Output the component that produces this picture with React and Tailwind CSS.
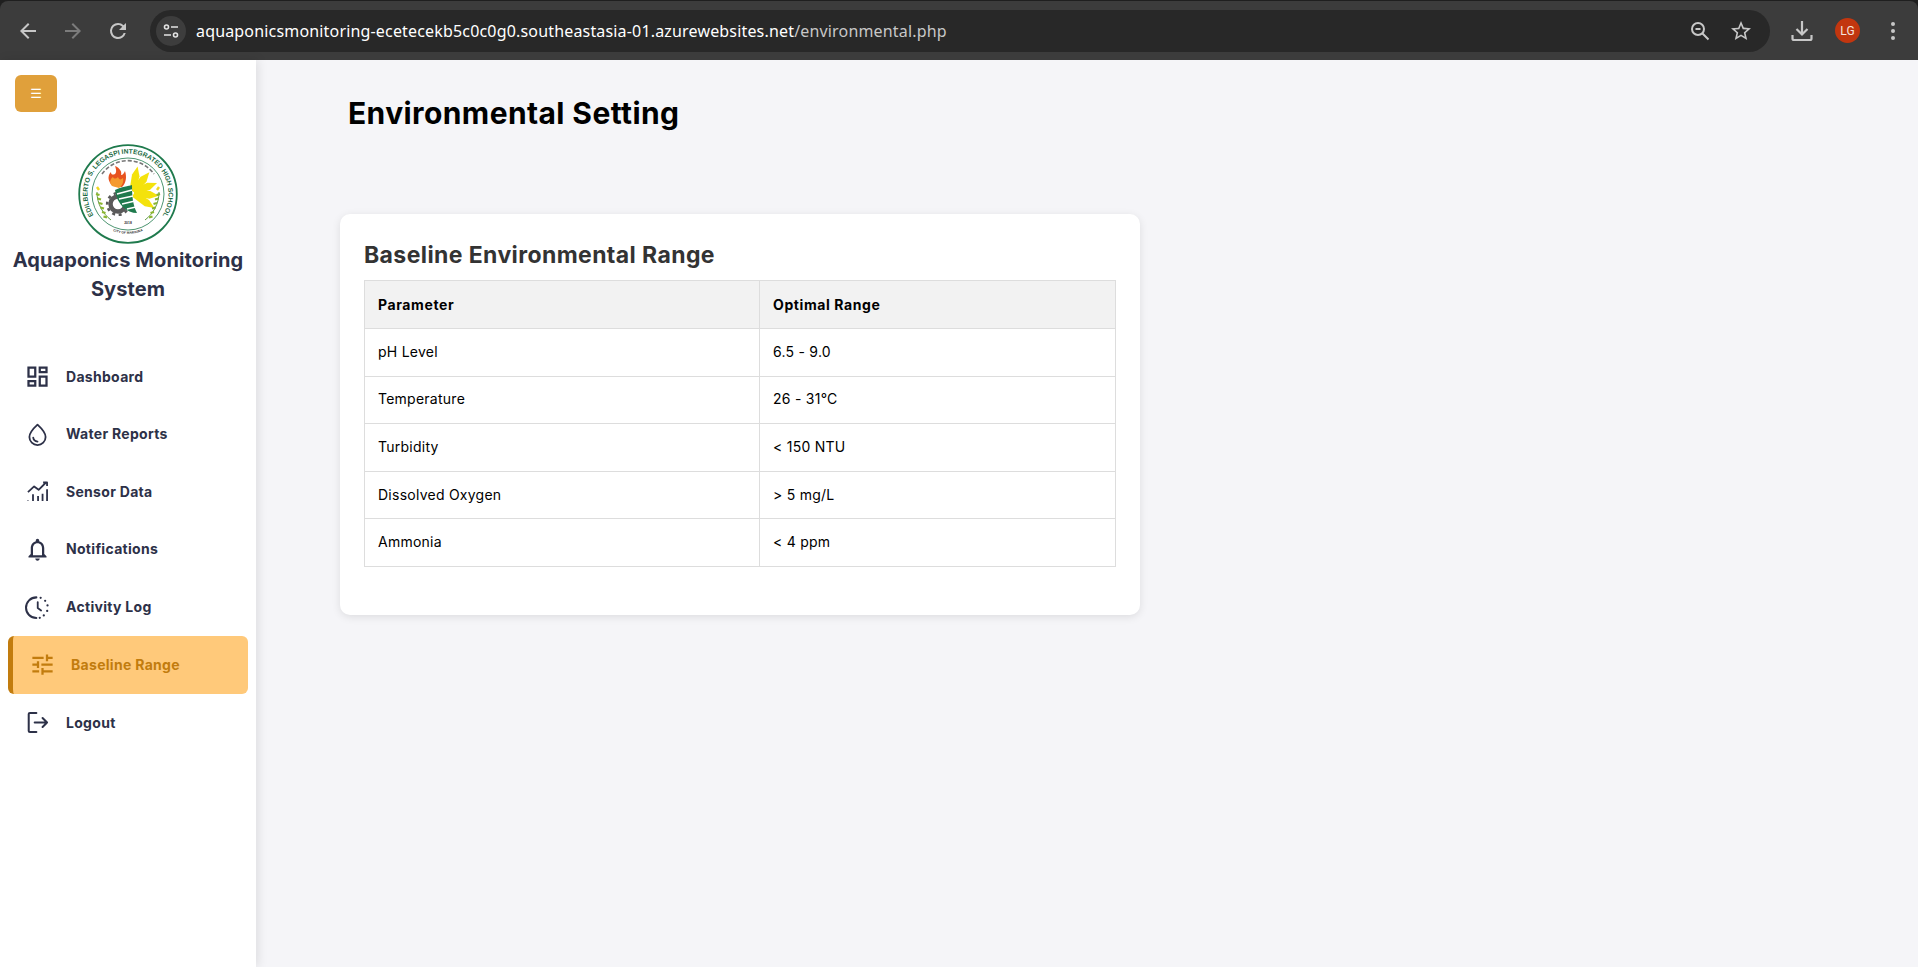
import React from "react";

const Ico = ({ d, className = "", size = 27 }) => (
  <svg width={size} height={size} viewBox="0 0 24 24" fill="currentColor" className={className}><path d={d} /></svg>
);

const Stroke = ({ children, className = "", size = 27, w = 2 }) => (
  <svg width={size} height={size} viewBox="0 0 24 24" fill="none" stroke="currentColor" strokeWidth={w} strokeLinecap="round" strokeLinejoin="round" className={className}>{children}</svg>
);

const navIcons = {
  dashboard: <Ico d="M19 5v2h-4V5h4M9 5v6H5V5h4m10 8v6h-4v-6h4M9 17v2H5v-2h4M21 3h-8v6h8V3zM11 3H3v10h8V3zm10 8h-8v10h8V11zm-10 4H3v6h8v-6z" />,
  water: (
    <Stroke w={1.6}>
      <path d="M12 3.2c3.6 3.3 7.2 6.9 7.2 11a7.2 7.2 0 0 1-14.4 0c0-4.100 3.600-7.700 7.200-11z" />
      <path d="M8.200 14.800c.3 2 1.700 3.300 3.800 3.500" />
    </Stroke>
  ),
  sensor: (
    <Stroke w={1.6}>
      <path d="M3.500 12.500 9 7.500l4 3 6.500-6.500" strokeLinecap="butt" />
      <path d="M17 4h3.500v3" strokeLinecap="butt" />
      <path d="M3.500 20.500v-.6M8 20.500v-6M12.500 20.500v-4.500M16.500 20.500v-6.500M20.500 20.500V10" strokeLinecap="butt" />
    </Stroke>
  ),
  bell: <Ico d="M12 22c1.100 0 2-.9 2-2h-4c0 1.100.9 2 2 2zm6-6v-5c0-3.070-1.630-5.640-4.500-6.320V4c0-.83-.67-1.500-1.500-1.500s-1.500.67-1.500 1.500v.68C7.640 5.360 6 7.920 6 11v5l-2 2v1h16v-1l-2-2zm-2 1H8v-6c0-2.480 1.510-4.500 4-4.500s4 2.020 4 4.500v6z" />,
  activity: (
    <Stroke w={1.8}>
      <path d="M11 3a9.200 9.200 0 0 0 0 18.400" />
      <path d="M12.200 7.200v5.200l3 2.200" strokeWidth={1.6} />
      <path d="M14.800 3.400v0M18.800 6v0M20.900 10.200v0M20.600 15v0M17.600 19v0M14 21.200v0" strokeWidth={2} />
    </Stroke>
  ),
  tune: <Ico d="M3 17v2h6v-2H3zM3 5v2h10V5H3zm10 16v-2h8v-2h-8v-2h-2v6h2zM7 9v2H3v2h4v2h2V9H7zm14 4v-2H11v2h10zm-6-4h2V7h4V5h-4V3h-2v6z" />,
  logout: (
    <Stroke w={1.8}>
      <path d="M11 3.500H5.200a1 1 0 0 0-1 1v15a1 1 0 0 0 1 1H11" />
      <path d="M9.500 12h11M16.500 8l4 4-4 4" />
    </Stroke>
  ),
};

const navItems = [
  ["dashboard", "Dashboard"],
  ["water", "Water Reports"],
  ["sensor", "Sensor Data"],
  ["bell", "Notifications"],
  ["activity", "Activity Log"],
  ["tune", "Baseline Range", true],
  ["logout", "Logout"],
];

const rows = [
  ["pH Level", "6.5 - 9.0"],
  ["Temperature", "26 - 31°C"],
  ["Turbidity", "< 150 NTU"],
  ["Dissolved Oxygen", "> 5 mg/L"],
  ["Ammonia", "< 4 ppm"],
];

function Crest() {
  const rays = [-78, -50, -22, 6, 34];
  const leaves = [0, 1, 2, 3, 4, 5];
  return (
    <svg width="100" height="100" viewBox="0 0 100 100" className="block">
      <defs>
        <path id="crestTop" d="M 26.200 82.800 A 40.500 40.500 0 1 1 73.800 82.800" />
        <path id="crestBottom" d="M 30 84.500 A 40 40 0 0 0 70 84.500" />
      </defs>
      <circle cx="50" cy="50" r="48.800" fill="#fff" stroke="#1f7a4d" strokeWidth="1.800" />
      <text fontFamily="'Liberation Sans', sans-serif" fontWeight="700" fontSize="6.700" fill="#1c6b43">
        <textPath href="#crestTop" startOffset="50%" textAnchor="middle">EDILBERTO S. LEGASPI INTEGRATED HIGH SCHOOL</textPath>
      </text>
      <text fontFamily="'Liberation Sans', sans-serif" fontWeight="700" fontSize="3.300" fill="#333">
        <textPath href="#crestBottom" startOffset="50%" textAnchor="middle">CITY OF MARIKINA</textPath>
      </text>
      <circle cx="50" cy="50" r="36" fill="none" stroke="#1f7a4d" strokeWidth="0.800" />
      <path d="M24 30 A 32 32 0 0 1 76 30" fill="none" stroke="#777" strokeWidth="1.600" strokeDasharray="4 2" />
      <g transform="translate(54 49)">
        {rays.map((r) => (
          <path key={r} d="M0 -3 L16 -3.800 L25 0 L16 3.800 L0 3 Z" fill="#f4e20c" transform={`rotate(${r}) translate(2 0)`} />
        ))}
      </g>
      <path d="M35 42c-5-4-6-10-2-14 0 3 2 3 4 2 2-2 1-5 0-8 5 2 7 6 6 9 2 0 3-2 4-4 2 6 1 12-3 16z" fill="#e8531f" />
      <path d="M34 42c-3-3-2-7 1-9 1 2 3 2 5 0 1 3 3 3 5 1 1 4-1 8-4 10z" fill="#f59a2e" />
      <circle cx="40" cy="60" r="7.500" fill="none" stroke="#5a5a5a" strokeWidth="4.500" />
      <circle cx="40" cy="60" r="10.800" fill="none" stroke="#5a5a5a" strokeWidth="2.600" strokeDasharray="3 3.600" />
      <path d="M37 46c6-3 14-4 17-5 0 12 1 20 5 28-10 0-20-8-22-23z" fill="#1f7a4d" />
      <path d="M39 50l15-4M41 55l14-3M44 60l13-3M49 65l9-2" stroke="#fff" strokeWidth="1.500" />
      <path d="M19 48c0 12 6 22 14 28M81 48c0 12-6 22-14 28" fill="none" stroke="#4f8f2f" strokeWidth="0.900" />
      {leaves.map((i) => (
        <g key={i} stroke="#8bb52f" strokeWidth="2.200">
          <path d={`M${18 + i * 1.500} ${50 + i * 4.500}l3.500 1`} />
          <path d={`M${82 - i * 1.500} ${50 + i * 4.500}l-3.500 1`} />
        </g>
      ))}
      <path d="M19 43l2 3M81 43l-2 3" stroke="#f0d820" strokeWidth="2.400" />
      <text x="50" y="80" textAnchor="middle" fontFamily="'Liberation Sans', sans-serif" fontWeight="700" fontSize="3.400" fill="#333">2018</text>
    </svg>
  );
}

function BrowserBar() {
  return (
    <header className="h-[60px] shrink-0 bg-[#1f1f1f] pt-[1px]">
      <div className="h-[59px] bg-[#3c3c3c] rounded-t-[8px] flex items-center text-[#c7c7c7]">
        <div className="flex items-center pl-[16px] gap-[21px] w-[150px] shrink-0">
          <Ico size={24} d="M20 11H7.830l5.590-5.590L12 4l-8 8 8 8 1.410-1.410L7.830 13H20v-2z" />
          <Ico size={24} className="text-[#7c7c7c]" d="M12 4l-1.410 1.410L16.170 11H4v2h12.170l-5.580 5.590L12 20l8-8z" />
          <Ico size={24} d="M17.650 6.350A7.960 7.960 0 0 0 12 4a8 8 0 1 0 7.730 10h-2.080A6 6 0 1 1 12 6c1.660 0 3.140.69 4.220 1.780L13 11h7V4l-2.350 2.350z" />
        </div>
        <div className="h-[42px] w-[1620px] shrink-0 rounded-full bg-[#282828] flex items-center pl-[6px] pr-[17px]">
          <div className="h-[30px] w-[30px] rounded-full bg-[#3d3d3d] flex items-center justify-center shrink-0 text-[#e3e3e3]">
            <svg width="18" height="18" viewBox="0 0 18 18" fill="none" stroke="currentColor" strokeWidth="1.600">
              <circle cx="4.500" cy="5" r="2" />
              <path d="M9 5h7M2 13h7" />
              <circle cx="13.500" cy="13" r="2" />
            </svg>
          </div>
          <div className="ml-[10px] font-['Noto_Sans',sans-serif] text-[16px] leading-none tracking-[0.17px] text-[#c7c7c7] whitespace-nowrap">
            <span className="text-white">aquaponicsmonitoring-ecetecekb5c0c0g0.southeastasia-01.azurewebsites.net</span>/environmental.php
          </div>
          <div className="ml-auto flex items-center gap-[17px]">
            <svg width="24" height="24" viewBox="0 0 24 24" fill="none" stroke="currentColor" strokeWidth="2">
              <circle cx="10" cy="10" r="6" />
              <path d="M7.500 10h5M14.500 14.500l6 6" />
            </svg>
            <Ico size={24} d="M22 9.240l-7.190-.62L12 2 9.190 8.630 2 9.240l5.460 4.730L5.820 21 12 17.270 18.180 21l-1.630-7.030L22 9.240zM12 15.400l-3.760 2.270 1-4.280-3.320-2.880 4.380-.38L12 6.100l1.710 4.040 4.380.38-3.320 2.880 1 4.280L12 15.400z" />
          </div>
        </div>
        <div className="flex items-center shrink-0 pl-[20px]">
          <svg width="24" height="24" viewBox="0 0 24 24" fill="none" stroke="currentColor" strokeWidth="2.200">
            <path d="M12 2v13M6.500 10l5.500 5.500 5.500-5.500" />
            <path d="M2.500 16v3.500a1.500 1.500 0 0 0 1.500 1.500h16a1.500 1.500 0 0 0 1.500-1.500V16" />
          </svg>
          <div className="ml-[21px] h-[25px] w-[25px] rounded-full bg-[#c2360f] text-[#f5e4de] flex items-center justify-center text-[12px] font-['Roboto',sans-serif]">LG</div>
          <svg width="6" height="20" viewBox="0 0 6 20" fill="currentColor" className="ml-[30px]">
            <circle cx="3" cy="3" r="2" />
            <circle cx="3" cy="10" r="2" />
            <circle cx="3" cy="17" r="2" />
          </svg>
        </div>
      </div>
    </header>
  );
}

function Sidebar() {
  return (
    <aside className="w-[256px] shrink-0 bg-white shadow-[2px_0_10px_rgba(0,0,0,0.1)] flex flex-col z-10">
      <div className="pt-[15px] pl-[15px]">
        <button className="h-[37px] w-[42px] rounded-[6px] bg-[#e0a03b] text-white text-[13px] leading-none flex items-center justify-center font-['DejaVu_Sans',sans-serif]">☰</button>
      </div>
      <div className="mt-[32px] flex flex-col items-center">
        <Crest />
        <h2 className="mt-[2px] text-center text-[20px] leading-[29px] font-bold text-[#2d3148] tracking-[0.1px] whitespace-pre-line">{"Aquaponics Monitoring\nSystem"}</h2>
      </div>
      <nav className="mt-[43.900px] flex flex-col pl-[8px] pr-[8px]">
        {navItems.map(([icon, label, active]) => (
          <a
            key={label}
            className={
              active
                ? "h-[58px] flex items-center rounded-[6px] bg-[#ffc97a] border-l-[5px] border-[#c27c0e] pl-[16px] text-[#c27c0e]"
                : "h-[57.600px] flex items-center pl-[16px] text-[#2d3148]"
            }
          >
            <span className="w-[27px] h-[27px] shrink-0">{navIcons[icon]}</span>
            <span className="ml-[15px] pb-[1px] text-[14px] font-bold tracking-[0.3px]">{label}</span>
          </a>
        ))}
      </nav>
    </aside>
  );
}

export default function App() {
  return (
    <div className="h-screen w-full overflow-hidden flex flex-col font-['Inter',sans-serif] bg-[#f5f5f8]">
      <BrowserBar />
      <div className="flex flex-1 min-h-0">
        <Sidebar />
        <main className="flex-1 pl-[84px] pt-[32px]">
          <h1 className="pl-[8px] text-[30px] leading-[42px] font-bold text-black tracking-[0.4px]">Environmental Setting</h1>
          <section className="mt-[80px] w-[800px] rounded-[10px] bg-white shadow-[0_2px_8px_rgba(0,0,0,0.1)] pt-[24px] px-[24px] pb-[48px]">
            <h2 className="text-[23px] leading-[34px] font-bold text-[#333] mb-[8px] tracking-[0.4px]">Baseline Environmental Range</h2>
            <table className="w-full border-collapse text-[14px] text-black table-fixed">
              <thead>
                <tr className="h-[48px] bg-[#f2f2f2]">
                  <th className="w-[395px] border border-[#ddd] px-[13px] pb-[1px] text-left font-bold tracking-[0.6px]">Parameter</th>
                  <th className="border border-[#ddd] px-[13px] pb-[1px] text-left font-bold tracking-[0.6px]">Optimal Range</th>
                </tr>
              </thead>
              <tbody>
                {rows.map(([a, b]) => (
                  <tr key={a} className="h-[47.600px]">
                    <td className="border border-[#ddd] px-[13px] pb-[2px] tracking-[0.25px]">{a}</td>
                    <td className="border border-[#ddd] px-[13px] pb-[2px] tracking-[0.25px]">{b}</td>
                  </tr>
                ))}
              </tbody>
            </table>
          </section>
        </main>
      </div>
    </div>
  );
}
